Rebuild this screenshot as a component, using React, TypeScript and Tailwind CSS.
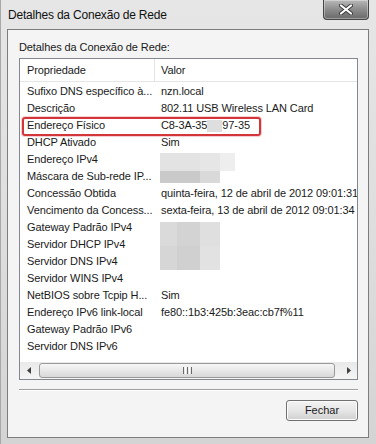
import React from "react";

const rows: [string, string][] = [
  ["Sufixo DNS específico à...", "nzn.local"],
  ["Descrição", "802.11 USB Wireless LAN Card"],
  ["Endereço Físico", "MAC"],
  ["DHCP Ativado", "Sim"],
  ["Endereço IPv4", ""],
  ["Máscara de Sub-rede IP...", ""],
  ["Concessão Obtida", "quinta-feira, 12 de abril de 2012 09:01:31"],
  ["Vencimento da Concess...", "sexta-feira, 13 de abril de 2012 09:01:34"],
  ["Gateway Padrão IPv4", ""],
  ["Servidor DHCP IPv4", ""],
  ["Servidor DNS IPv4", ""],
  ["Servidor WINS IPv4", ""],
  ["NetBIOS sobre Tcpip H...", "Sim"],
  ["Endereço IPv6 link-local", "fe80::1b3:425b:3eac:cb7f%11"],
  ["Gateway Padrão IPv6", ""],
  ["Servidor DNS IPv6", ""],
];

// pixelated censor blocks
function Censor({ cells }: { cells: string[][] }) {
  return (
    <div className="flex flex-col">
      {cells.map((row, i) => (
        <div key={i} className="flex">
          {row.map((c, j) => (
            <div key={j} className={c} />
          ))}
        </div>
      ))}
    </div>
  );
}

export default function App() {
  return (
    <div
      className="w-[376px] h-[444px] flex flex-col bg-gradient-to-b from-[#e6e6e6] via-[#dedede] to-[#d4d4d4] border-l border-[#a8a8a8] text-[#1a1a1a]"
      style={{ fontFamily: '"Liberation Sans", Arial, sans-serif' }}
    >
      {/* Title bar */}
      <div className="h-[29px] flex justify-between items-start">
        <div className="pl-[7px] pt-[7px] text-[12px] leading-[16px] tracking-[-0.2px] text-[#111]">
          Detalhes da Conexão de Rede
        </div>
        <div className="mr-[7px] w-[46px] h-[20px] rounded-b-[4px] border border-t-0 border-[#454545] bg-gradient-to-b from-[#b9b9b9] via-[#8c8c8c] to-[#6a6a6a] flex items-center justify-center shadow-[inset_0_0_0_1px_rgba(255,255,255,0.35)]">
          <svg width="14" height="11" viewBox="0 0 14 11">
            <path d="M2 1.5 L12 9.5 M12 1.5 L2 9.5" stroke="#3a3a3a" strokeWidth="4" strokeLinecap="round" />
            <path d="M2 1.5 L12 9.5 M12 1.5 L2 9.5" stroke="#ffffff" strokeWidth="2.2" strokeLinecap="round" />
          </svg>
        </div>
      </div>

      {/* Client area */}
      <div className="ml-[6px] mr-[7px] h-[409px] border border-[#7d7d7d] bg-[#f4f4f4] pl-[11px] pr-[10px] flex flex-col">
        <div className="pt-[10px] text-[11px] leading-[15px] tracking-[-0.1px]">
          Detalhes da Conexão de Rede:
        </div>

        {/* List view */}
        <div className="mt-[3px] h-[322px] border border-[#828790] bg-white flex flex-col text-[11px] tracking-[-0.1px]">
          <div className="h-[23px] shrink-0 flex border-b border-[#e5e5e5]">
            <div className="w-[135px] border-r border-[#e5e5e5] pl-[7px] flex items-center">Propriedade</div>
            <div className="pl-[6px] flex items-center">Valor</div>
          </div>

          <div className="flex-1 relative overflow-hidden pt-[1px]">
            {rows.map(([k, v], i) => (
              <div key={i} className="h-[17px] flex items-center whitespace-nowrap">
                <div className="w-[135px] shrink-0 pl-[7px]">{k}</div>
                <div className="pl-[6px] flex items-center">
                  {v === "MAC" ? (
                    <>
                      <span>C8-3A-35</span>
                      <span className="inline-block w-[15px] h-[12px] bg-[#dedede]" />
                      <span>97-35</span>
                    </>
                  ) : (
                    v
                  )}
                </div>
              </div>
            ))}

            {/* highlight around the physical address row */}
            <div className="absolute left-[2px] top-[35px] w-[239px] h-[19px] rounded-[3px] border-2 border-[#d2353a] shadow-[0_0_0_1px_rgba(230,150,150,0.45)]" />

            {/* censored IPv4 / mask */}
            <div className="absolute left-[140px] top-[71px]">
              <Censor
                cells={[
                  ["w-[40px] h-[18px] bg-[#e3e3e3]", "w-[20px] h-[18px] bg-[#e6e6e6]", "w-[15px] h-[18px] bg-[#eeeeee]"],
                  ["w-[40px] h-[12px] bg-[#cacaca]", "w-[20px] h-[12px] bg-[#d9d9d9]"],
                ]}
              />
            </div>

            {/* censored gateway / dhcp / dns */}
            <div className="absolute left-[140px] top-[140px]">
              <Censor
                cells={[
                  ["w-[17px] h-[24px] bg-[#dadada]", "w-[23px] h-[24px] bg-[#d3d3d3]", "w-[20px] h-[24px] bg-[#dfdfdf]"],
                  ["w-[17px] h-[24px] bg-[#d6d6d6]", "w-[23px] h-[24px] bg-[#d0d0d0]", "w-[20px] h-[24px] bg-[#e2e2e2]"],
                ]}
              />
            </div>
          </div>

          {/* Horizontal scrollbar */}
          <div className="h-[17px] shrink-0 flex items-center bg-gradient-to-b from-[#e9e9e9] to-[#f5f5f5]">
            <div className="w-[17px] h-[17px] flex items-center justify-center">
              <svg width="4" height="7" viewBox="0 0 4 7">
                <path d="M4 0 L0 3.5 L4 7 Z" fill="#404040" />
              </svg>
            </div>
            <div className="flex-1 h-[17px] flex items-center pl-[2px] pr-[5px]">
              <div className="flex-1 h-[15px] rounded-[3px] border border-[#9a9a9a] bg-gradient-to-b from-[#f6f6f6] via-[#e8e8e8] to-[#d8d8d8] flex items-center justify-center gap-[1px]">
                <div className="w-[1px] h-[7px] bg-[#6a6a6a]" />
                <div className="w-[1px] h-[7px] bg-[#ffffff]" />
                <div className="w-[1px] h-[7px] bg-[#6a6a6a]" />
                <div className="w-[1px] h-[7px] bg-[#ffffff]" />
                <div className="w-[1px] h-[7px] bg-[#6a6a6a]" />
              </div>
            </div>
            <div className="w-[17px] h-[17px] flex items-center justify-center">
              <svg width="4" height="7" viewBox="0 0 4 7">
                <path d="M0 0 L4 3.5 L0 7 Z" fill="#404040" />
              </svg>
            </div>
          </div>
        </div>

        <div className="mt-[9px] h-[1px] bg-[#a0a0a0] shadow-[0_1px_0_#ffffff]" />

        <div className="mt-[10px] flex justify-end">
          <div className="w-[72px] h-[21px] rounded-[3px] border border-[#707070] bg-gradient-to-b from-[#f3f3f3] via-[#e6e6e6] to-[#d0d0d0] shadow-[inset_0_0_0_1px_#fcfcfc] flex items-center justify-center text-[11px]">
            Fechar
          </div>
        </div>
      </div>
    </div>
  );
}
